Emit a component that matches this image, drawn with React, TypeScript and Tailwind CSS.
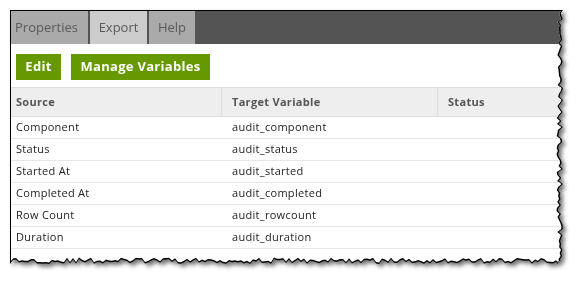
import React from 'react';

const W = 554;
const H = 255;
const STEP = 3;

// deterministic jagged edges for the torn-paper look
const makeJag = (n: number, seed: number) => {
  let s = seed;
  const out: number[] = [];
  for (let i = 0; i < n; i++) {
    s = (s * 16807) % 2147483647;
    out.push((s / 2147483647) * 5);
  }
  return out;
};

const rightJag = makeJag(Math.ceil(H / STEP) + 1, 11);
const bottomJag = makeJag(Math.ceil(W / STEP) + 1, 29);

const tornPath = (off: number, inset: number) => {
  const pts: string[] = ['0px 0px'];
  rightJag.forEach((r, i) => {
    const y = Math.min(i * STEP, H - 4);
    pts.push(`${W - 1 - r - off - inset}px ${y - off}px`);
  });
  for (let j = bottomJag.length - 1; j >= 0; j--) {
    const x = Math.min(j * STEP, W - 6);
    pts.push(`${x - off}px ${H - 1 - bottomJag[j] - off - inset}px`);
  }
  pts.push(`0px ${H - 1 - bottomJag[0] - off - inset}px`);
  return `polygon(${pts.join(',')})`;
};

const rows = [
  ['Component', 'audit_component'],
  ['Status', 'audit_status'],
  ['Started At', 'audit_started'],
  ['Completed At', 'audit_completed'],
  ['Row Count', 'audit_rowcount'],
  ['Duration', 'audit_duration'],
];

const App: React.FC = () => {
  return (
    <div className="w-[581px] h-[282px] bg-white pt-[10px] pl-[10px] font-['Open_Sans',sans-serif]">
      <div className="w-[554px] h-[255px] [filter:drop-shadow(3px_3px_2px_rgba(0,0,0,0.55))]">
        <div className="w-full h-full bg-black pt-px pl-px" style={{ clipPath: tornPath(0, 0) }}>
          <div className="w-full h-full bg-white overflow-hidden" style={{ clipPath: tornPath(1, 1.5) }}>
            {/* Tabs */}
            <div className="flex h-[33px] bg-[#545454] gap-[2px] text-[13px] text-[#5a5a5a]">
              <div className="w-[77px] bg-[#aaaaaa] flex items-center pl-[4px]">Properties</div>
              <div className="w-[57px] bg-[#cccccc] flex items-center justify-center">Export</div>
              <div className="w-[46px] bg-[#aaaaaa] flex items-center justify-center">Help</div>
            </div>

            {/* Toolbar */}
            <div className="flex gap-[10px] pl-[5px] pt-[10px] pb-[7px]">
              <button className="h-[26px] w-[45px] bg-[#669900] text-white font-bold text-[13px] tracking-[0.3px]">
                Edit
              </button>
              <button className="h-[26px] w-[139px] bg-[#669900] text-white font-bold text-[13px] tracking-[0.3px]">
                Manage Variables
              </button>
            </div>

            {/* Table */}
            <div className="border-t border-[#dddddd] text-[11px] tracking-[0.3px]">
              <div className="grid grid-cols-[211px_216px_1fr] h-[29px] bg-[#eeeeee] border-b border-[#dddddd] font-bold text-[#555555]">
                <div className="flex items-center pl-[5px] border-r border-[#dddddd]">Source</div>
                <div className="flex items-center pl-[10px] border-r border-[#dddddd]">Target Variable</div>
                <div className="flex items-center pl-[10px]">Status</div>
              </div>
              {rows.map(([src, tgt]) => (
                <div key={src} className="grid grid-cols-[211px_216px_1fr] h-[22px] border-b border-[#e6e6e6] text-[#222222]">
                  <div className="flex items-center pl-[5px]">{src}</div>
                  <div className="flex items-center pl-[10px]">{tgt}</div>
                  <div />
                </div>
              ))}
            </div>
          </div>
        </div>
      </div>
    </div>
  );
};

export default App;
